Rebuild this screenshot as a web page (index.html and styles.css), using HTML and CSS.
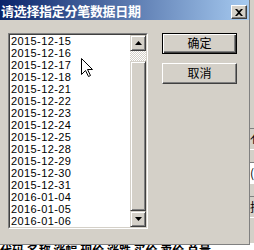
FILE: index.html
```html
<!DOCTYPE html>
<html>
<head>
<meta charset="utf-8">
<link rel="stylesheet" href="styles.css">
</head>
<body>
<div class="desktop">
  <div class="bgwin">
    <div class="bg-side">
      <div class="bg-cell">亻</div>
      <div class="bg-cell white">(</div>
      <div class="bg-cell">拄</div>
    </div>
    <div class="bg-text">代码 名称 涨幅 现价 涨跌 买价 卖价 总量</div>
  </div>
  <div class="dialog">
    <div class="titlebar">
      <span class="title">请选择指定分笔数据日期</span>
      <div class="closebtn">
        <svg width="8" height="7" viewBox="0 0 8 7"><path d="M0 0h2l2 2 2-2h2L5 3.5 8 7H6L4 5 2 7H0l3-3.5z" fill="#000"/></svg>
      </div>
    </div>
    <div class="client">
      <div class="listbox">
        <div class="listbox-inner">
          <div class="items">
            <div class="item">2015-12-15</div>
            <div class="item">2015-12-16</div>
            <div class="item">2015-12-17</div>
            <div class="item">2015-12-18</div>
            <div class="item">2015-12-21</div>
            <div class="item">2015-12-22</div>
            <div class="item">2015-12-23</div>
            <div class="item">2015-12-24</div>
            <div class="item">2015-12-25</div>
            <div class="item">2015-12-28</div>
            <div class="item">2015-12-29</div>
            <div class="item">2015-12-30</div>
            <div class="item">2015-12-31</div>
            <div class="item">2016-01-04</div>
            <div class="item">2016-01-05</div>
            <div class="item">2016-01-06</div>
          </div>
          <div class="scrollbar">
            <div class="sb-btn"><svg width="7" height="4" viewBox="0 0 7 4"><path d="M3.5 0L7 4H0z" fill="#000"/></svg></div>
            <div class="sb-track"></div>
            <div class="sb-thumb"></div>
            <div class="sb-btn"><svg width="7" height="4" viewBox="0 0 7 4"><path d="M0 0h7L3.5 4z" fill="#000"/></svg></div>
          </div>
        </div>
      </div>
      <div class="buttons">
        <div class="btn default">确定</div>
        <div class="btn">取消</div>
      </div>
    </div>
  </div>
  <svg class="cursor" width="12" height="19" viewBox="0 0 12 19"><path d="M0.5 0.5V16.5L4.5 12.5L7.5 18.5L9.5 17.5L6.5 11.5H11.5Z" fill="#fff" stroke="#000" stroke-width="1"/></svg>
</div>
</body>
</html>
```
FILE: styles.css
```css
html, body {
  margin: 0;
  padding: 0;
}
.desktop {
  position: relative;
  width: 254px;
  height: 250px;
  overflow: hidden;
  background: #d4d0c8;
}
.bgwin {
  position: absolute;
  left: 0;
  top: 0;
  width: 254px;
  height: 250px;
  background: #d4d0c8;
}
.bg-side {
  position: absolute;
  left: 250px;
  top: 128px;
  width: 20px;
  display: flex;
  flex-direction: column;
  gap: 12px;
}
.bg-cell {
  height: 20px;
  border-top: 1px solid #808080;
  border-bottom: 1px solid #fff;
  font: 12px "Noto Sans CJK SC", sans-serif;
  line-height: 20px;
  color: #000;
}
.bg-cell.white {
  background: #fff;
}
.bg-text {
  position: absolute;
  left: 0;
  top: 243px;
  width: 254px;
  height: 7px;
  background: #fff;
  font: bold 12px "Noto Sans CJK SC", sans-serif;
  line-height: 14px;
  color: #000;
  white-space: nowrap;
  overflow: hidden;
}
.dialog {
  position: absolute;
  left: 0;
  top: 0;
  width: 250px;
  height: 245px;
  box-sizing: border-box;
  background: #d4d0c8;
  border-right: 1px solid #808080;
  border-bottom: 1px solid #808080;
  display: flex;
  flex-direction: column;
}
.titlebar {
  height: 20px;
  flex: none;
  background: linear-gradient(to right, #0a246a, #a6caf0);
  display: flex;
  align-items: flex-start;
  position: relative;
}
.title {
  padding: 1px 0 0 1px;
  font: bold 13px "Noto Sans CJK SC", sans-serif;
  letter-spacing: -0.3px;
  line-height: 20px;
  height: 19px;
  color: #fff;
  white-space: nowrap;
  overflow: hidden;
}
.closebtn {
  position: absolute;
  left: 231px;
  top: 5px;
  width: 16px;
  height: 14px;
  box-sizing: border-box;
  background: #d4d0c8;
  border: 1px solid;
  border-color: #fff #404040 #404040 #fff;
  box-shadow: inset -1px -1px #808080;
  display: flex;
  align-items: center;
  justify-content: center;
}
.closebtn svg {
  display: block;
  margin-left: -1px;
}
.client {
  display: flex;
  align-items: flex-start;
  padding: 13px 0 0 8px;
}
.listbox {
  width: 140px;
  height: 196px;
  box-sizing: border-box;
  border: 1px solid;
  border-color: #808080 #fff #fff #808080;
}
.listbox-inner {
  height: 100%;
  box-sizing: border-box;
  border: 1px solid;
  border-color: #404040 #d4d0c8 #d4d0c8 #404040;
  display: flex;
}
.items {
  flex: 1;
  background: #fff;
  overflow: hidden;
}
.item {
  height: 12px;
  padding-left: 1px;
  font: 11px "Liberation Sans", Arial, sans-serif;
  letter-spacing: 0.4px;
  line-height: 12px;
  color: #000;
  white-space: nowrap;
}
.scrollbar {
  width: 16px;
  flex: none;
  display: flex;
  flex-direction: column;
}
.sb-btn, .sb-thumb {
  box-sizing: border-box;
  background: #d4d0c8;
  border: 1px solid;
  border-color: #d4d0c8 #404040 #404040 #d4d0c8;
  box-shadow: inset 1px 1px #fff, inset -1px -1px #808080;
}
.sb-btn {
  height: 16px;
  display: flex;
  align-items: center;
  justify-content: center;
}
.sb-btn svg {
  display: block;
}
.sb-track {
  height: 10px;
  background: repeating-conic-gradient(#fff 0 25%, #d4d0c8 0 50%) 0 0 / 2px 2px;
}
.sb-thumb {
  height: 150px;
}
.buttons {
  display: flex;
  flex-direction: column;
  gap: 9px;
  margin-left: 14px;
}
.btn {
  width: 75px;
  height: 21px;
  box-sizing: border-box;
  background: #d4d0c8;
  border: 1px solid;
  border-color: #fff #404040 #404040 #fff;
  box-shadow: inset -1px -1px #808080;
  font: 12px "Noto Sans CJK SC", sans-serif;
  line-height: 17px;
  text-align: center;
  color: #000;
}
.btn.default {
  border-color: #000;
  box-shadow: inset 1px 1px #fff, inset -1px -1px #404040, inset -2px -2px #808080;
}
.cursor {
  position: absolute;
  left: 81px;
  top: 58px;
}
```
